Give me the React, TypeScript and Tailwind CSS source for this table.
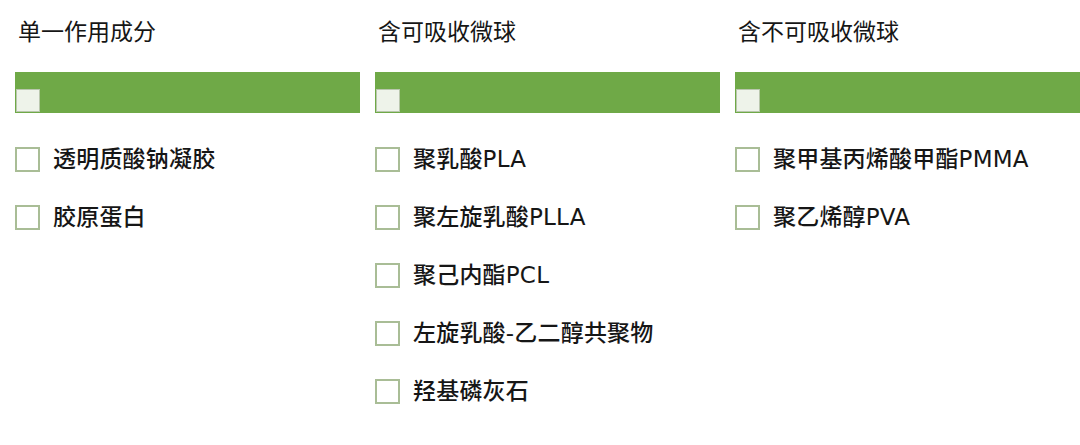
import React from "react";

const columns = [
  {
    title: "单一作用成分",
    items: ["透明质酸钠凝胶", "胶原蛋白"],
  },
  {
    title: "含可吸收微球",
    items: ["聚乳酸PLA", "聚左旋乳酸PLLA", "聚己内酯PCL", "左旋乳酸-乙二醇共聚物", "羟基磷灰石"],
  },
  {
    title: "含不可吸收微球",
    items: ["聚甲基丙烯酸甲酯PMMA", "聚乙烯醇PVA"],
  },
];

export default function App() {
  return (
    <div
      className="h-[445px] w-[1080px] overflow-hidden bg-white pl-[15px] text-[#161616]"
      style={{ fontFamily: '"DejaVu Sans", "Noto Sans CJK SC", sans-serif' }}
    >
      <div className="grid grid-cols-[345px_345px_345px] gap-x-[15px]">
        {columns.map((col) => (
          <div key={col.title} className="flex flex-col">
            {/* Header */}
            <div className="flex h-[64px] items-center pl-[3px] text-[23px]">{col.title}</div>

            {/* Green bar with select-all box */}
            <div className="mt-[8px] flex h-[41px] items-end bg-[#6fa947] pb-[1px] pl-[1px]">
              <div className="h-[23px] w-[24px] border border-[#b9c7ad] bg-[#eef3ea]" />
            </div>

            {/* Options */}
            <div className="mt-[17px] flex flex-col">
              {col.items.map((item) => (
                <div key={item} className="flex h-[58px] items-center gap-[13px]">
                  <div className="h-[25px] w-[25px] border-2 border-[#a9bd96] bg-white" />
                  <span className="text-[23px] font-medium leading-none tracking-[0.2px]">{item}</span>
                </div>
              ))}
            </div>
          </div>
        ))}
      </div>
    </div>
  );
}
